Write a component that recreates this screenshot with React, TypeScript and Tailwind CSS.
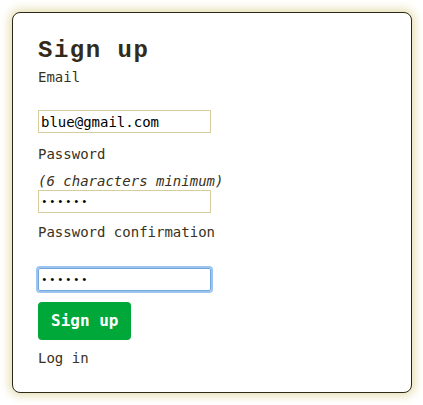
export default function App() {
  return (
    <div className="min-h-screen bg-white p-3 font-['DejaVu_Sans_Mono',monospace] text-[#3a3120]">
      <div className="h-[381px] w-[400px] rounded-[8px] border border-[#2e2818] bg-white px-[25px] pt-[24px] shadow-[0_0_10px_3px_#e6dfb4]">
        <h1 className="font-['Liberation_Mono',monospace] text-[24px] font-bold leading-[28px] tracking-[1.5px] text-[#332b1a]">
          Sign up
        </h1>
        <form className="flex flex-col text-[14px]">
          <label className="mt-[2px] leading-[20px]">Email</label>
          <input
            type="email"
            defaultValue="blue@gmail.com"
            className="mt-[23px] h-[23px] w-[173px] border border-[#d6cc9c] px-[2px] text-[14px] text-black outline-none"
          />
          <label className="mt-[11px] leading-[20px]">Password</label>
          <em className="mt-[8px] leading-[18px]">(6 characters minimum)</em>
          <input
            type="password"
            defaultValue="123456"
            className="h-[23px] w-[173px] border border-[#d6cc9c] px-[2px] font-['Liberation_Mono',monospace] text-[11px] tracking-[1.4px] text-black outline-none"
          />
          <label className="mt-[9px] leading-[20px]">Password confirmation</label>
          <input
            type="password"
            defaultValue="123456"
            autoFocus
            className="mt-[26px] h-[23px] w-[173px] rounded-[2px] border border-[#6fa6dc] px-[2px] font-['Liberation_Mono',monospace] text-[11px] tracking-[1.4px] text-black caret-black shadow-[0_0_0_2px_#9cc4ee] outline-none"
          />
          <div className="mt-[11px]">
            <button
              type="button"
              className="h-[38px] rounded-[4px] bg-[#00a83a] px-[13px] text-[16px] font-bold text-white"
            >
              Sign up
            </button>
          </div>
          <a className="mt-[8px] leading-[20px]">Log in</a>
        </form>
      </div>
    </div>
  );
}
